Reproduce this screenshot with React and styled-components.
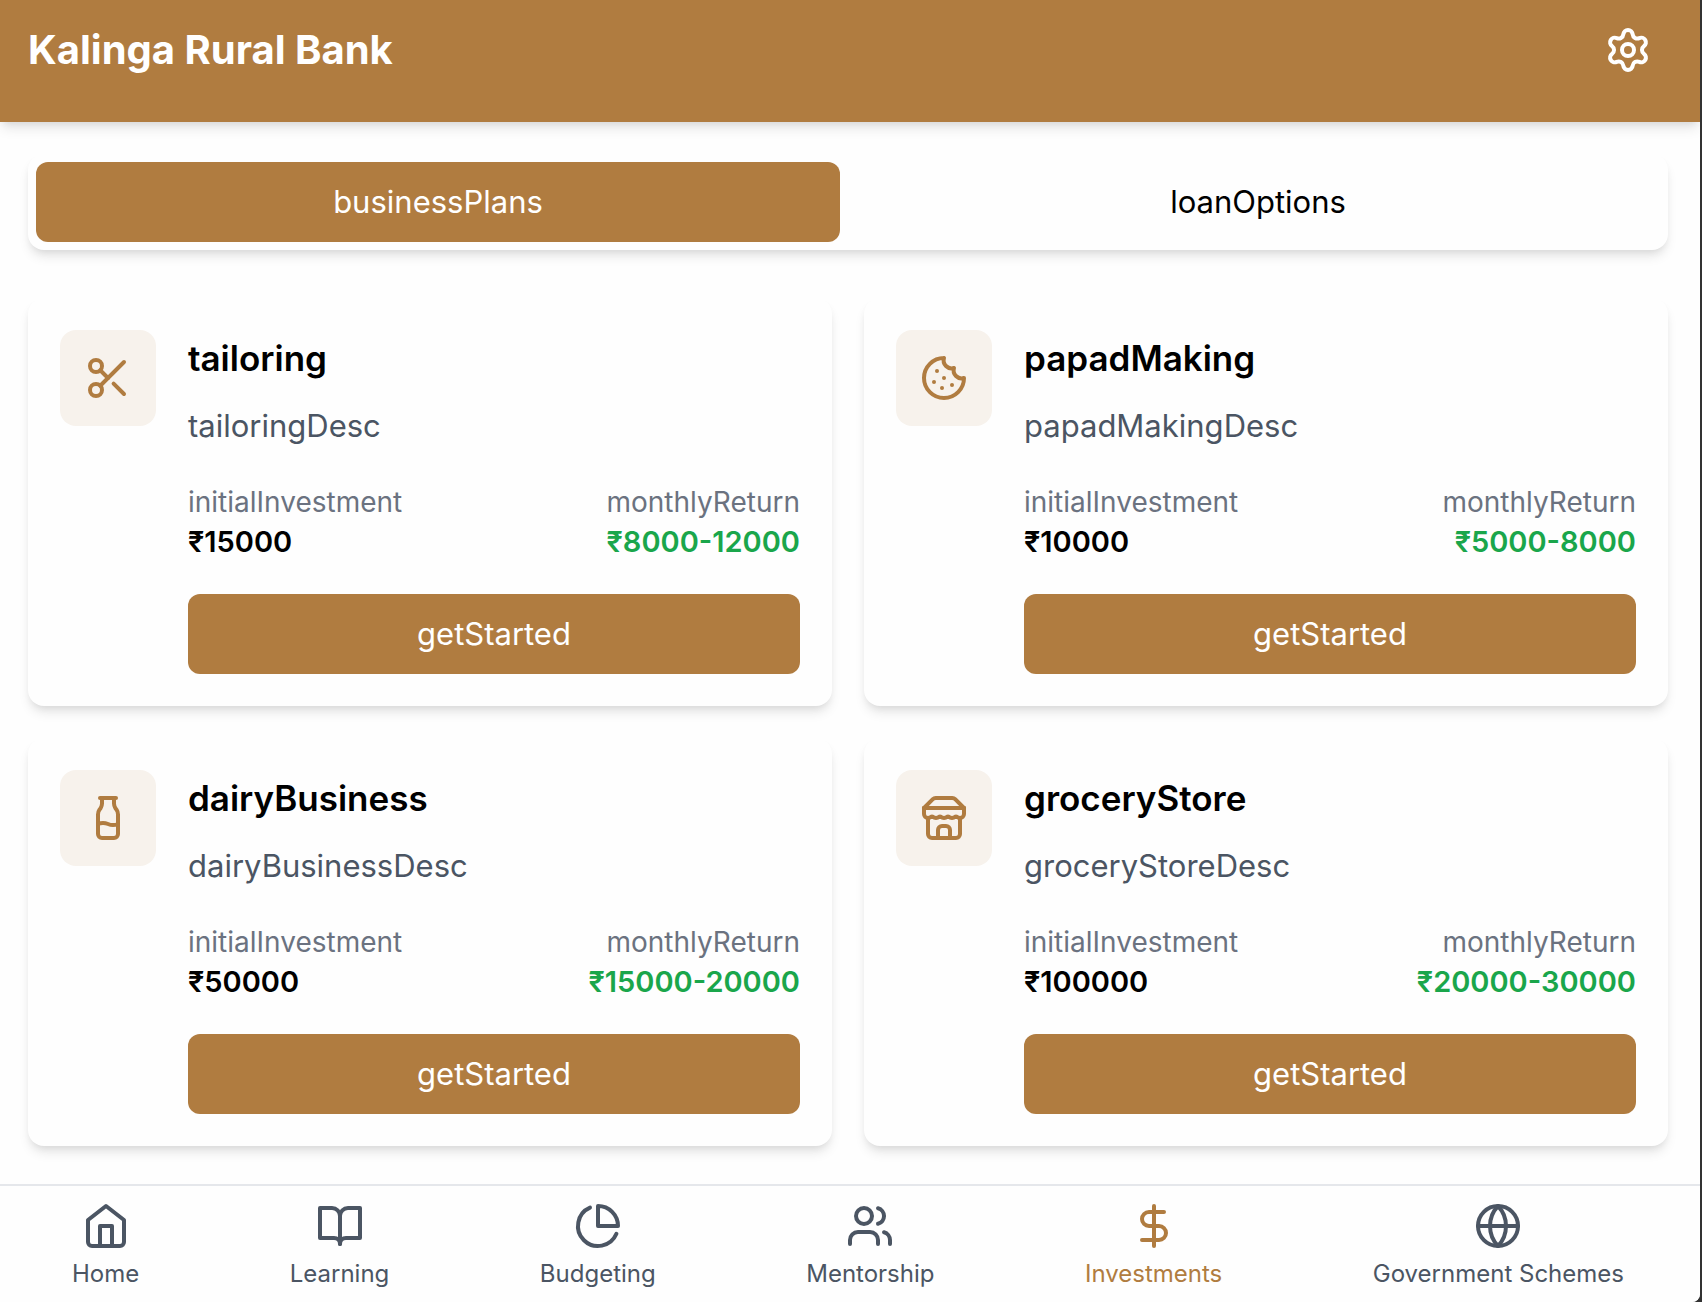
import React, { useState } from "react";
import styled, { createGlobalStyle, ThemeProvider } from "styled-components";
import { Settings, Scissors, Cookie, Milk, DollarSign, Globe } from "lucide-react";

const theme = {
  brand: "#b07c40",
  brandSoft: "#f7f2ec",
  surface: "#fefefe",
  ink: "#000000",
  muted: "#4b5563",
  subtle: "#6b7280",
  positive: "#1aa64b",
  line: "#e5e7eb",
  shadow: "0 8px 12px -2px rgba(0, 0, 0, 0.1), 0 4px 8px -4px rgba(0, 0, 0, 0.1)",
};

const GlobalStyle = createGlobalStyle`
  *, *::before, *::after { box-sizing: border-box; }
  body {
    margin: 0;
    background: #323232;
    font-family: Inter, "Liberation Sans", sans-serif;
    -webkit-font-smoothing: antialiased;
  }
  h1, h2, p, dl, dt, dd { margin: 0; }
  button { border: 0; padding: 0; font: inherit; cursor: pointer; }
`;

const Page = styled.div`
  display: flex;
  flex-direction: column;
  min-height: 100vh;
  margin-right: 2px;
  background: ${(p) => p.theme.surface};
  color: ${(p) => p.theme.ink};
  border-bottom-right-radius: 8px;
  overflow: hidden;
`;

const Header = styled.header`
  display: flex;
  align-items: center;
  justify-content: space-between;
  padding: 10px 32px 32px 28px;
  background: ${(p) => p.theme.brand};
  color: #ffffff;
  box-shadow: ${(p) => p.theme.shadow};
`;

const BankName = styled.h1`
  font-size: 40px;
  line-height: 56px;
  font-weight: 700;
`;

const IconButton = styled.button`
  display: flex;
  padding: 16px;
  background: transparent;
  color: inherit;
`;

const Main = styled.main`
  flex: 1;
  display: flex;
  flex-direction: column;
  gap: 48px;
  padding: 32px 32px 32px 28px;
`;

const Tabs = styled.div`
  display: grid;
  grid-template-columns: 1fr 1fr;
  gap: 16px;
  padding: 8px;
  border-radius: 16px;
  background: ${(p) => p.theme.surface};
  box-shadow: ${(p) => p.theme.shadow};
`;

const Tab = styled.button`
  height: 80px;
  border-radius: 12px;
  font-size: 31px;
  line-height: 48px;
  background: ${(p) => (p.$active ? p.theme.brand : "transparent")};
  color: ${(p) => (p.$active ? "#ffffff" : p.theme.ink)};
`;

const Plans = styled.section`
  display: grid;
  grid-template-columns: 1fr 1fr;
  gap: 32px;
`;

const Card = styled.article`
  display: flex;
  align-items: flex-start;
  gap: 32px;
  padding: 32px;
  border-radius: 16px;
  background: ${(p) => p.theme.surface};
  box-shadow: ${(p) => p.theme.shadow};
`;

const IconTile = styled.div`
  display: flex;
  padding: 24px;
  border-radius: 16px;
  background: ${(p) => p.theme.brandSoft};
  color: ${(p) => p.theme.brand};
`;

const CardBody = styled.div`
  flex: 1;
  min-width: 0;
`;

const PlanTitle = styled.h2`
  font-size: 35px;
  line-height: 56px;
  font-weight: 600;
`;

const PlanText = styled.p`
  margin-top: 16px;
  font-size: 31px;
  line-height: 48px;
  color: ${(p) => p.theme.muted};
`;

const Figures = styled.dl`
  display: flex;
  justify-content: space-between;
  margin: 32px 0;
  line-height: 40px;
`;

const Figure = styled.div`
  text-align: ${(p) => (p.$end ? "right" : "left")};
`;

const FigureLabel = styled.dt`
  font-size: 28px;
  color: ${(p) => p.theme.subtle};
`;

const FigureValue = styled.dd`
  font-size: 29px;
  font-weight: 600;
  color: ${(p) => (p.$positive ? p.theme.positive : p.theme.ink)};
`;

const StartButton = styled.button`
  width: 100%;
  height: 80px;
  border-radius: 12px;
  font-size: 31px;
  line-height: 48px;
  background: ${(p) => p.theme.brand};
  color: #ffffff;
`;

const BottomNav = styled.nav`
  display: flex;
  justify-content: space-between;
  padding: 16px 76px 12px 72px;
  border-top: 2px solid ${(p) => p.theme.line};
  background: ${(p) => p.theme.surface};
`;

const NavItem = styled.a`
  display: flex;
  flex-direction: column;
  align-items: center;
  gap: 8px;
  font-size: 24px;
  line-height: 32px;
  text-decoration: none;
  color: ${(p) => (p.$active ? p.theme.brand : p.theme.muted)};
`;

const Glyph = ({ size = 48, children }) => (
  <svg
    width={size}
    height={size}
    viewBox="0 0 24 24"
    fill="none"
    stroke="currentColor"
    strokeWidth="2"
    strokeLinecap="round"
    strokeLinejoin="round"
    aria-hidden="true"
  >
    {children}
  </svg>
);

const HomeIcon = (props) => (
  <Glyph {...props}>
    <path d="m3 9 9-7 9 7v11a2 2 0 0 1-2 2H5a2 2 0 0 1-2-2z" />
    <polyline points="9 22 9 12 15 12 15 22" />
  </Glyph>
);

const BookIcon = (props) => (
  <Glyph {...props}>
    <path d="M2 3h6a4 4 0 0 1 4 4v14a3 3 0 0 0-3-3H2z" />
    <path d="M22 3h-6a4 4 0 0 0-4 4v14a3 3 0 0 1 3-3h7z" />
  </Glyph>
);

const PieIcon = (props) => (
  <Glyph {...props}>
    <path d="M21.21 15.89A10 10 0 1 1 8 2.83" />
    <path d="M22 12A10 10 0 0 0 12 2v10z" />
  </Glyph>
);

const UsersIcon = (props) => (
  <Glyph {...props}>
    <path d="M16 21v-2a4 4 0 0 0-4-4H6a4 4 0 0 0-4 4v2" />
    <circle cx="9" cy="7" r="4" />
    <path d="M22 21v-2a4 4 0 0 0-3-3.87" />
    <path d="M16 3.13a4 4 0 0 1 0 7.75" />
  </Glyph>
);

const StoreIcon = (props) => (
  <Glyph {...props}>
    <path d="m2 7 4.41-4.41A2 2 0 0 1 7.83 2h8.34a2 2 0 0 1 1.42.59L22 7" />
    <path d="M4 12v8a2 2 0 0 0 2 2h12a2 2 0 0 0 2-2v-8" />
    <path d="M15 22v-4a2 2 0 0 0-2-2h-2a2 2 0 0 0-2 2v4" />
    <path d="M2 7h20" />
    <path d="M22 7v3a2 2 0 0 1-2 2a2.7 2.7 0 0 1-1.59-.63.7.7 0 0 0-.82 0A2.7 2.7 0 0 1 16 12a2.7 2.7 0 0 1-1.59-.63.7.7 0 0 0-.82 0A2.7 2.7 0 0 1 12 12a2.7 2.7 0 0 1-1.59-.63.7.7 0 0 0-.82 0A2.7 2.7 0 0 1 8 12a2.7 2.7 0 0 1-1.59-.63.7.7 0 0 0-.82 0A2.7 2.7 0 0 1 4 12a2 2 0 0 1-2-2V7" />
  </Glyph>
);

const plans = [
  { id: "tailoring", icon: Scissors, cost: "₹15000", income: "₹8000-12000" },
  { id: "papadMaking", icon: Cookie, cost: "₹10000", income: "₹5000-8000" },
  { id: "dairyBusiness", icon: Milk, cost: "₹50000", income: "₹15000-20000" },
  { id: "groceryStore", icon: StoreIcon, cost: "₹100000", income: "₹20000-30000" },
];

const navItems = [
  { label: "Home", icon: HomeIcon },
  { label: "Learning", icon: BookIcon },
  { label: "Budgeting", icon: PieIcon },
  { label: "Mentorship", icon: UsersIcon },
  { label: "Investments", icon: DollarSign, active: true },
  { label: "Government Schemes", icon: Globe },
];

function PlanCard({ id, icon: Icon, cost, income }) {
  return (
    <Card>
      <IconTile>
        <Icon size={48} />
      </IconTile>
      <CardBody>
        <PlanTitle>{id}</PlanTitle>
        <PlanText>{id}Desc</PlanText>
        <Figures>
          <Figure>
            <FigureLabel>initialInvestment</FigureLabel>
            <FigureValue>{cost}</FigureValue>
          </Figure>
          <Figure $end>
            <FigureLabel>monthlyReturn</FigureLabel>
            <FigureValue $positive>{income}</FigureValue>
          </Figure>
        </Figures>
        <StartButton type="button">getStarted</StartButton>
      </CardBody>
    </Card>
  );
}

export default function App() {
  const [tab, setTab] = useState("businessPlans");
  return (
    <ThemeProvider theme={theme}>
      <GlobalStyle />
      <Page>
        <Header>
          <BankName>Kalinga Rural Bank</BankName>
          <IconButton type="button" aria-label="Settings">
            <Settings size={48} />
          </IconButton>
        </Header>
        <Main>
          <Tabs role="tablist">
            {["businessPlans", "loanOptions"].map((name) => (
              <Tab
                key={name}
                type="button"
                role="tab"
                aria-selected={tab === name}
                $active={tab === name}
                onClick={() => setTab(name)}
              >
                {name}
              </Tab>
            ))}
          </Tabs>
          <Plans>
            {plans.map((plan) => (
              <PlanCard key={plan.id} {...plan} />
            ))}
          </Plans>
        </Main>
        <BottomNav>
          {navItems.map(({ label, icon: Icon, active }) => (
            <NavItem key={label} href="#" $active={active} aria-current={active ? "page" : undefined}>
              <Icon size={48} />
              <span>{label}</span>
            </NavItem>
          ))}
        </BottomNav>
      </Page>
    </ThemeProvider>
  );
}
